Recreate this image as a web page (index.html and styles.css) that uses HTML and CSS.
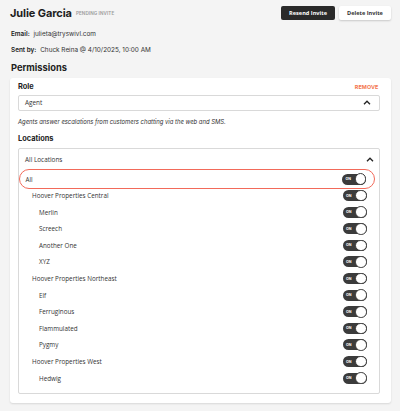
FILE: index.html
```html
<!DOCTYPE html>
<html>
<head>
<meta charset="utf-8">
<link rel="stylesheet" href="styles.css">
</head>
<body>
<div class="page">
  <div class="header">
    <div class="title-wrap">
      <h1 class="title">Julie Garcia</h1>
      <span class="badge">PENDING INVITE</span>
    </div>
    <div class="actions">
      <button class="btn btn-dark">Resend Invite</button>
      <button class="btn btn-light">Delete Invite</button>
    </div>
  </div>
  <div class="meta meta-email"><span class="meta-label">Email:</span> julieta@tryswivl.com</div>
  <div class="meta meta-sent"><span class="meta-label">Sent by:</span> Chuck Reina @ 4/10/2025, 10:00 AM</div>
  <h2 class="section-title">Permissions</h2>
  <div class="card">
    <div class="role-head">
      <span class="label">Role</span>
      <span class="remove">REMOVE</span>
    </div>
    <div class="select">
      <span>Agent</span>
      <svg class="chev" width="8" height="5" viewBox="0 0 8 5"><polyline points="1,4.2 4,1.2 7,4.2" fill="none" stroke="#222" stroke-width="1.3"/></svg>
    </div>
    <p class="desc">Agents answer escalations from customers chatting via the web and SMS.</p>
    <div class="label loc-label">Locations</div>
    <div class="locbox">
      <div class="loc-head">
        <span>All Locations</span>
        <svg class="chev" width="8" height="5" viewBox="0 0 8 5"><polyline points="1,4.2 4,1.2 7,4.2" fill="none" stroke="#222" stroke-width="1.3"/></svg>
      </div>
      <div class="list">
        <div class="row row-all"><span>All</span><span class="toggle"><span class="on">ON</span><span class="knob"></span></span></div>
        <div class="row lvl1"><span>Hoover Properties Central</span><span class="toggle"><span class="on">ON</span><span class="knob"></span></span></div>
        <div class="row lvl2"><span>Merlin</span><span class="toggle"><span class="on">ON</span><span class="knob"></span></span></div>
        <div class="row lvl2"><span>Screech</span><span class="toggle"><span class="on">ON</span><span class="knob"></span></span></div>
        <div class="row lvl2"><span>Another One</span><span class="toggle"><span class="on">ON</span><span class="knob"></span></span></div>
        <div class="row lvl2"><span>XYZ</span><span class="toggle"><span class="on">ON</span><span class="knob"></span></span></div>
        <div class="row lvl1"><span>Hoover Properties Northeast</span><span class="toggle"><span class="on">ON</span><span class="knob"></span></span></div>
        <div class="row lvl2"><span>Elf</span><span class="toggle"><span class="on">ON</span><span class="knob"></span></span></div>
        <div class="row lvl2"><span>Ferruginous</span><span class="toggle"><span class="on">ON</span><span class="knob"></span></span></div>
        <div class="row lvl2"><span>Flammulated</span><span class="toggle"><span class="on">ON</span><span class="knob"></span></span></div>
        <div class="row lvl2"><span>Pygmy</span><span class="toggle"><span class="on">ON</span><span class="knob"></span></span></div>
        <div class="row lvl1"><span>Hoover Properties West</span><span class="toggle"><span class="on">ON</span><span class="knob"></span></span></div>
        <div class="row lvl2"><span>Hedwig</span><span class="toggle"><span class="on">ON</span><span class="knob"></span></span></div>
      </div>
    </div>
  </div>
</div>
</body>
</html>
```

FILE: styles.css
```css
* { box-sizing: border-box; }
html, body { margin: 0; padding: 0; }
body {
  background: #f4f4f4;
  font-family: Inter, "Noto Sans", sans-serif;
  color: #222;
  width: 400px;
  height: 411px;
  overflow: hidden;
}
.page { padding: 6px 9px 0 10px; }
.header {
  display: flex;
  justify-content: space-between;
  align-items: center;
  height: 14px;
}
.title-wrap { display: flex; align-items: center; gap: 4px; }
.title {
  margin: 0;
  font-size: 11px;
  font-weight: 700;
  line-height: 14px;
  letter-spacing: -0.1px;
  color: #1e1e1e;
}
.badge {
  font-size: 4.6px;
  font-weight: 600;
  color: #9a9a9a;
  letter-spacing: 0.1px;
  margin-top: 1px;
}
.actions { display: flex; gap: 4px; }
.btn {
  font-family: "Open Sans", sans-serif;
  font-size: 5.6px;
  font-weight: 700;
  height: 14px;
  border: none;
  border-radius: 2px;
  padding: 0;
  cursor: pointer;
}
.btn-dark {
  width: 54px;
  background: #2a2a2a;
  color: #fff;
}
.btn-light {
  width: 52px;
  background: #fff;
  color: #333;
  box-shadow: 0 1px 2px rgba(0,0,0,0.18);
}
.meta {
  font-size: 6.4px;
  line-height: 10px;
  color: #333;
  padding-left: 1px;
}
.meta-email { margin-top: 9px; }
.meta-sent { margin-top: 6px; }
.meta-label { font-weight: 600; color: #222; margin-right: 2px; }
.section-title {
  margin: 6px 0 0 1px;
  font-size: 9.3px;
  font-weight: 700;
  line-height: 14px;
  color: #222;
}
.card {
  margin-top: 3px;
  width: 381px;
  background: #fff;
  border-radius: 3px;
  box-shadow: 0 1px 2px rgba(0,0,0,0.12);
  padding: 2px 11.5px 9px 8px;
}
.role-head {
  display: flex;
  justify-content: space-between;
  align-items: center;
  height: 14px;
}
.label {
  font-size: 7.4px;
  font-weight: 700;
  color: #222;
  line-height: 14px;
}
.remove {
  font-size: 5.4px;
  font-weight: 700;
  color: #f47650;
  letter-spacing: 0.1px;
  margin-right: 1px;
}
.select {
  margin-top: 1px;
  height: 15.5px;
  border: 1px solid #d9d9d9;
  border-radius: 2px;
  display: flex;
  justify-content: space-between;
  align-items: center;
  padding: 0 8px 0 6px;
  font-family: "Open Sans", sans-serif;
  font-size: 6.4px;
  color: #333;
}
.chev { display: block; }
.desc {
  margin: 6px 0 0;
  font-size: 5.9px;
  font-style: italic;
  line-height: 10px;
  color: #333;
}
.loc-label { margin-top: 5.5px; }
.locbox {
  margin-top: 2px;
  border: 1px solid #d9d9d9;
  border-radius: 2px;
  padding: 0 0 7px;
}
.loc-head {
  height: 20px;
  display: flex;
  justify-content: space-between;
  align-items: center;
  padding: 0 5px 0 6px;
  font-family: "Open Sans", sans-serif;
  font-size: 6.4px;
  color: #333;
}
.list {
  font-family: "Open Sans", sans-serif;
  font-size: 6.3px;
  font-weight: 500;
  color: #333;
}
.row {
  height: 16.6px;
  display: flex;
  justify-content: space-between;
  align-items: center;
  padding-right: 12px;
}
.row-all {
  height: 20px;
  margin: 0 4px -1.7px 0;
  border: 1.3px solid #f26a5a;
  border-radius: 10px;
  padding: 0 7.5px 0 5.5px;
}
.lvl1 { padding-left: 13px; }
.lvl2 { padding-left: 20px; }
.toggle {
  width: 24px;
  height: 11px;
  background: #3b3b3b;
  border-radius: 6px;
  display: flex;
  align-items: center;
  justify-content: space-between;
}
.on {
  font-size: 3.6px;
  font-weight: 700;
  color: #fff;
  padding-left: 3.5px;
  font-family: Inter, sans-serif;
}
.knob {
  width: 11.5px;
  height: 11.5px;
  border-radius: 50%;
  background: #fff;
  border: 1.2px solid #3b3b3b;
}
```
